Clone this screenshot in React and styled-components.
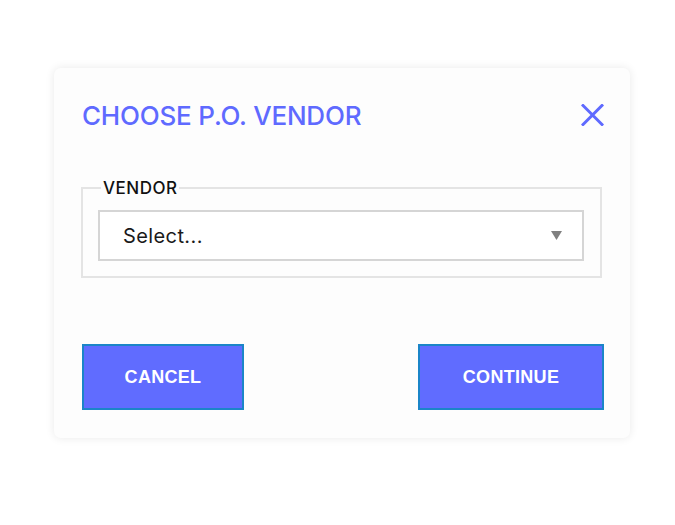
import styled, { createGlobalStyle } from "styled-components";

const GlobalStyle = createGlobalStyle`
  html, body {
    margin: 0;
    padding: 0;
    background: #ffffff;
  }
  * {
    box-sizing: border-box;
  }
`;

const Page = styled.div`
  width: 675px;
  height: 525px;
  padding: 68px 0 0 54px;
`;

const Card = styled.div`
  width: 576px;
  height: 370px;
  background: #fdfdfd;
  border-radius: 7px;
  box-shadow: 0 0 10px rgba(0, 0, 0, 0.09);
  padding: 28px 26px 28px 28px;
  display: flex;
  flex-direction: column;
`;

const Header = styled.div`
  display: flex;
  align-items: center;
  justify-content: space-between;
  height: 38px;
`;

const Title = styled.h2`
  margin: 0;
  font-family: Inter, "Liberation Sans", sans-serif;
  font-weight: 500;
  font-size: 26px;
  color: #5f6aff;
  letter-spacing: -0.2px;
`;

const CloseButton = styled.button`
  border: none;
  background: none;
  padding: 0;
  width: 24px;
  height: 24px;
  display: flex;
  align-items: center;
  justify-content: center;
  cursor: pointer;
`;

const Fieldset = styled.fieldset`
  margin: 44px 2px 0 -1px;
  padding: 12px 16px 15px 15px;
  border: 2px solid #e4e4e4;
`;

const Legend = styled.legend`
  margin-left: 3px;
  padding: 0 2px;
  font-family: Inter, "Liberation Sans", sans-serif;
  font-weight: 500;
  font-size: 17px;
  letter-spacing: 0.5px;
  color: #111;
`;

const SelectBox = styled.div`
  height: 51px;
  border: 2px solid #d5d5d5;
  background: #fff;
  display: flex;
  align-items: center;
  justify-content: space-between;
  padding: 0 20px 0 23px;
  font-family: Inter, "Liberation Sans", sans-serif;
  font-size: 20px;
  letter-spacing: 0.4px;
  color: #1a1a1a;
`;

const Actions = styled.div`
  margin-top: auto;
  display: flex;
  justify-content: space-between;
  align-items: flex-end;
`;

const Button = styled.button`
  width: ${(p) => p.$width}px;
  height: 66px;
  background: #606cff;
  border: 2px solid #1b85c8;
  color: #fff;
  font-family: "Liberation Sans", Arial, sans-serif;
  font-weight: 700;
  font-size: 18px;
  letter-spacing: 0.3px;
  cursor: pointer;
`;

const App = () => {
  return (
    <Page>
      <GlobalStyle />
      <Card>
        <Header>
          <Title>CHOOSE P.O. VENDOR</Title>
          <CloseButton aria-label="Close">
            <svg width="23" height="22" viewBox="0 0 23 22">
              <path
                d="M2 1.5 L21 20.5 M21 1.5 L2 20.5"
                stroke="#5f6aff"
                strokeWidth="3"
                strokeLinecap="square"
              />
            </svg>
          </CloseButton>
        </Header>
        <Fieldset>
          <Legend>VENDOR</Legend>
          <SelectBox>
            <span>Select...</span>
            <svg width="11" height="9" viewBox="0 0 11 9">
              <path d="M0 0 H11 L5.5 9 Z" fill="#808080" />
            </svg>
          </SelectBox>
        </Fieldset>
        <Actions>
          <Button $width={162}>CANCEL</Button>
          <Button $width={186}>CONTINUE</Button>
        </Actions>
      </Card>
    </Page>
  );
};

export default App;
